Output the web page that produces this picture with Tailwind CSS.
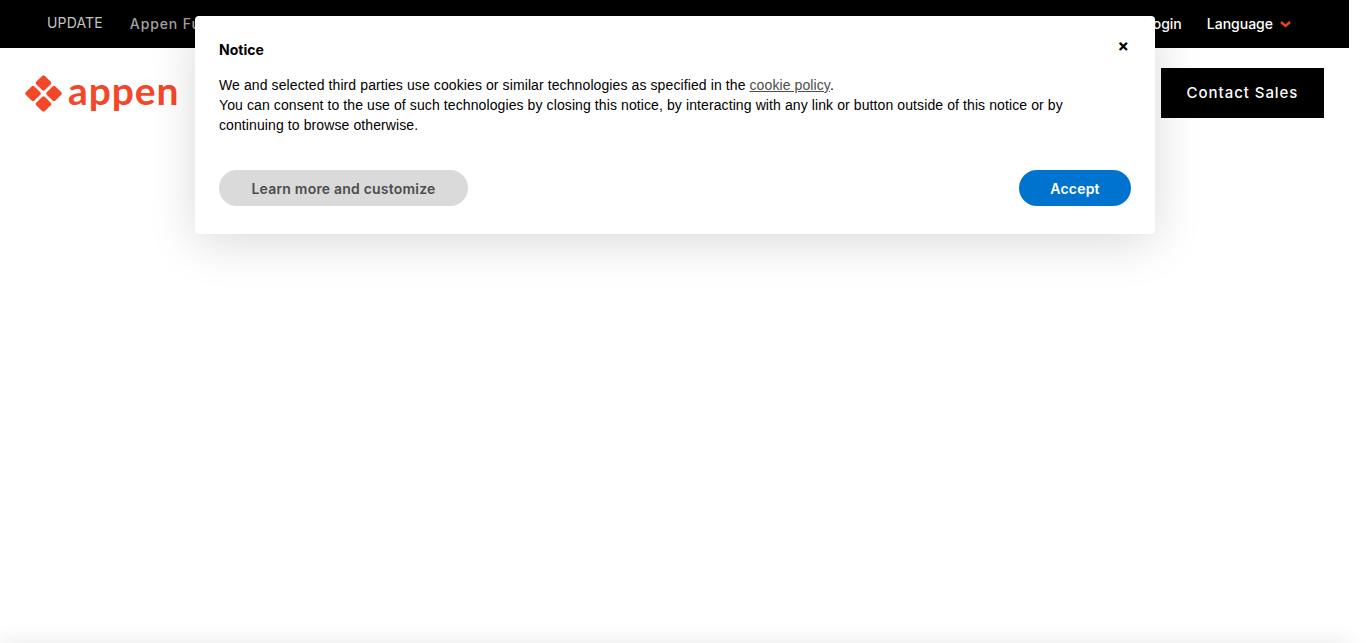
<!DOCTYPE html>
<html lang="en">
<head>
  <meta charset="UTF-8" />
  <title>Appen</title>
  <script src="https://cdn.jsdelivr.net/npm/@tailwindcss/browser@4"></script>
</head>
<body class="relative h-[643px] overflow-hidden bg-white font-['Inter',sans-serif]">
  <div class="w-[1349px]">
    <!-- top bar -->
    <div class="flex h-[48px] items-center bg-black pl-[47px] pr-[58px] pb-[2px]">
      <span class="mb-[1px] text-[14px] tracking-[0.15px] text-[#c4c4c4]">UPDATE</span>
      <span class="ml-[27px] text-[14px] font-medium tracking-[0.9px] text-[#a3a3a3]">Appen Fu</span>
      <div class="ml-auto flex items-center">
        <span class="text-[14px] font-medium text-white">Login</span>
        <span class="ml-[25px] text-[14px] font-medium text-white">Language</span>
        <svg class="ml-[7px] mt-[2px]" width="11" height="7" viewBox="0 0 11 7"><path d="M1 1l4.500 4 4.500-4" fill="none" stroke="#f0421f" stroke-width="2.4"/></svg>
      </div>
    </div>

    <!-- main header -->
    <div class="flex h-[90px] items-start justify-between pl-[25px] pr-[25px] pt-[20px]">
      <div class="flex h-[50px] items-center">
        <svg width="37" height="37" viewBox="0 0 37 37" fill="#f4472a">
          <rect x="12.500" y="2" width="12" height="12" rx="2" transform="rotate(45 18.500 8)"/>
          <rect x="12.500" y="23" width="12" height="12" rx="2" transform="rotate(45 18.500 29)"/>
          <rect x="2" y="12.500" width="12" height="12" rx="2" transform="rotate(45 8 18.500)"/>
          <rect x="23" y="12.500" width="12" height="12" rx="2" transform="rotate(45 29 18.500)"/>
        </svg>
        <span class="mb-[5px] ml-[6px] font-['Lato',sans-serif] text-[39px] leading-none font-bold tracking-[0.9px] text-[#f4472a]">appen</span>
      </div>
      <div class="flex h-[50px] w-[163px] items-center justify-center bg-black text-[15px] font-medium tracking-[0.95px] text-white">Contact Sales</div>
    </div>
  </div>

  <!-- shadow coming up from below the fold -->
  <div class="absolute bottom-[-20px] left-0 h-[20px] w-[1349px] shadow-[0_0_24px_rgba(0,0,0,0.1)]"></div>

  <!-- cookie notice -->
  <div class="absolute left-[195px] top-[16px] h-[218px] w-[960px] rounded-[4px] bg-white px-[24px] pt-[24px] shadow-[0_8px_48px_rgba(0,0,0,0.15)]">
    <div class="absolute right-[26px] top-[22px] text-[17px] leading-[17px] font-bold text-black">×</div>
    <p class="text-[14px] leading-[20px] font-bold text-black">Notice</p>
    <p class="mt-[15px] w-[880px] font-['Liberation_Sans',sans-serif] text-[14px] leading-[20px] tracking-[0.1px] text-black">
      We and selected third parties use cookies or similar technologies as specified in the <span class="text-[#4d4d4d] underline">cookie policy</span>.<br>
      You can consent to the use of such technologies by closing this notice, by interacting with any link or button outside of this notice or by continuing to browse otherwise.
    </p>
    <div class="mt-[35px] flex items-center justify-between">
      <div class="flex h-[36px] w-[249px] items-center justify-center rounded-full bg-[#dadada] text-[14px] font-semibold tracking-[0.2px] text-[#4d4d4d]">Learn more and customize</div>
      <div class="flex h-[36px] w-[112px] items-center justify-center rounded-full bg-[#0073ce] text-[14px] font-semibold tracking-[0.2px] text-white">Accept</div>
    </div>
  </div>
</body>
</html>
